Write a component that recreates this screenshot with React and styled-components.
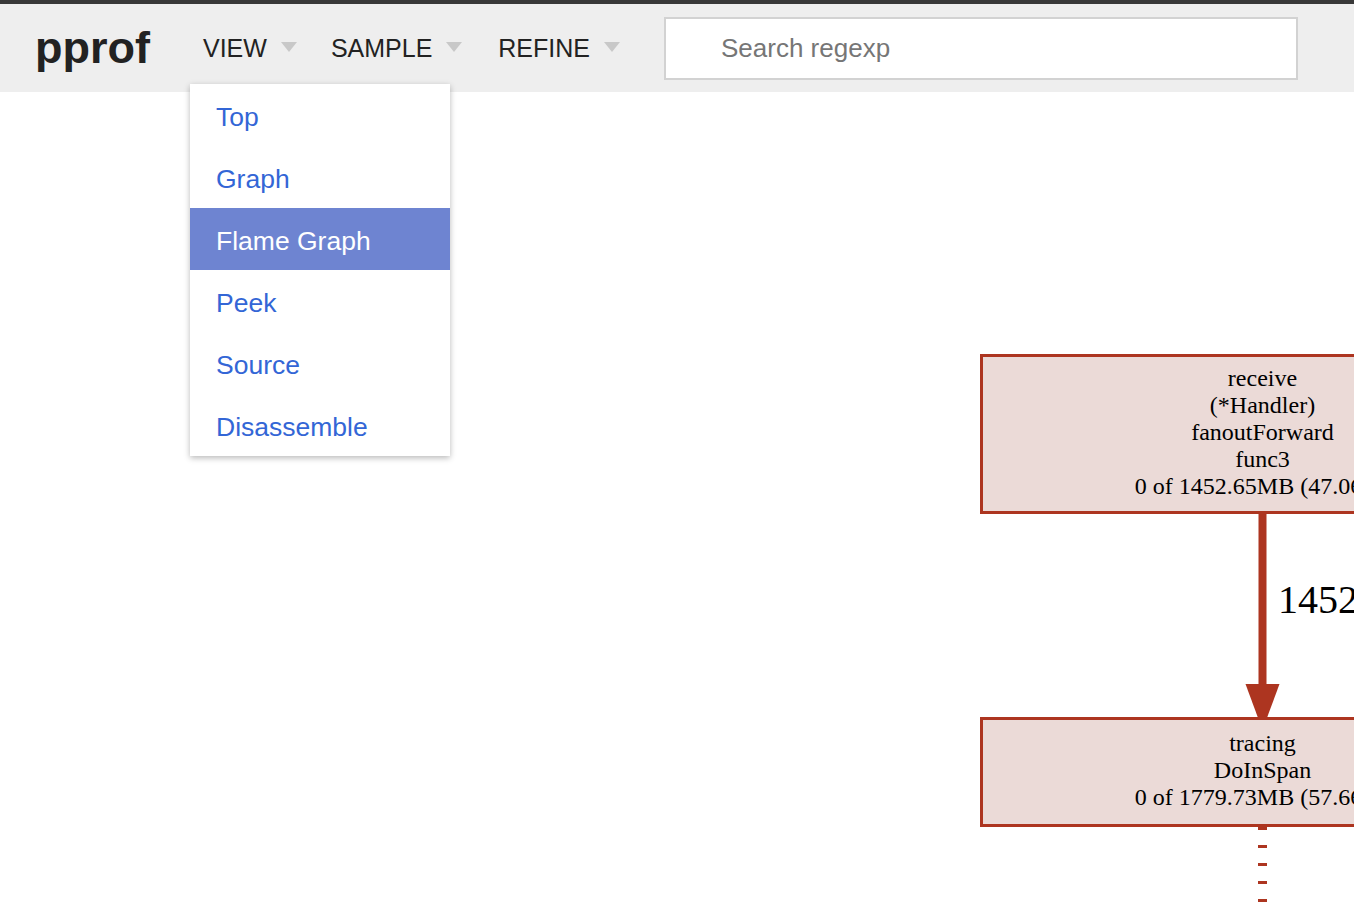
import styled, { createGlobalStyle } from "styled-components";

const GlobalStyle = createGlobalStyle`
  html, body {
    margin: 0;
    padding: 0;
    background: #fff;
    font-family: "Liberation Sans", Arial, sans-serif;
  }
`;

const Page = styled.div`
  position: relative;
  width: 100%;
  height: 912px;
  overflow: hidden;
  border-top: 4px solid #383838;
  box-sizing: border-box;
`;

const Header = styled.header`
  display: flex;
  align-items: center;
  height: 88px;
  padding-left: 35px;
  background: #eeeeee;
`;

const Logo = styled.h1`
  margin: 0 53px 0 0;
  font-size: 45px;
  font-weight: 700;
  color: #222;
`;

const MenuButton = styled.div`
  display: flex;
  align-items: center;
  gap: 14px;
  margin-right: ${(p) => p.$after}px;
  font-size: 25px;
  color: #222;
  cursor: pointer;
`;

const Caret = styled.span`
  width: 0;
  height: 0;
  border-left: 8.5px solid transparent;
  border-right: 8.5px solid transparent;
  border-top: 10px solid #c8c8c8;
  margin-top: -3px;
`;

const Search = styled.input`
  box-sizing: border-box;
  width: 634px;
  height: 63px;
  border: 2px solid #d2d2d2;
  background: #fff;
  padding: 0 0 0 55px;
  font-family: inherit;
  font-size: 26px;
  color: #333;
  outline: none;
  &::placeholder {
    color: #767676;
  }
`;

const Dropdown = styled.ul`
  position: absolute;
  top: 80px;
  left: 190px;
  width: 260px;
  margin: 0;
  padding: 0;
  list-style: none;
  background: #fff;
  box-shadow: 0 2px 6px rgba(0, 0, 0, 0.28);
`;

const Item = styled.li`
  display: flex;
  align-items: center;
  box-sizing: border-box;
  height: 62px;
  padding: 4px 0 0 26px;
  font-size: 26.5px;
  color: ${(p) => (p.$active ? "#fff" : "#3366d6")};
  background: ${(p) => (p.$active ? "#6e84d1" : "transparent")};
  cursor: pointer;
`;

const Canvas = styled.svg`
  display: block;
  width: 1354px;
  height: 820px;
`;

const views = ["Top", "Graph", "Flame Graph", "Peek", "Source", "Disassemble"];
const stroke = "#ad3520";
const fill = "#ebdad7";

function Node({ y, h, lines, firstBaseline }) {
  return (
    <g>
      <rect x="981.5" y={y} width="600" height={h} fill={fill} stroke={stroke} strokeWidth="3" />
      {lines.map((t, i) => (
        <text
          key={i}
          x="1262.5"
          y={firstBaseline + i * 27}
          textAnchor="middle"
          fontFamily="'Liberation Serif', 'Times New Roman', serif"
          fontSize="24"
          fill="#000"
        >
          {t}
        </text>
      ))}
    </g>
  );
}

export default function App() {
  return (
    <>
      <GlobalStyle />
      <Page>
        <Header>
          <Logo>pprof</Logo>
          <MenuButton $after={34}>VIEW<Caret /></MenuButton>
          <MenuButton $after={36}>SAMPLE<Caret /></MenuButton>
          <MenuButton $after={44}>REFINE<Caret /></MenuButton>
          <Search placeholder="Search regexp" />
        </Header>
        <Canvas viewBox="0 92 1354 820">
          <Node
            y={355.5}
            h={157}
            firstBaseline={386}
            lines={["receive", "(*Handler)", "fanoutForward", "func3", "0 of 1452.65MB (47.06%)"]}
          />
          <line x1="1262.5" y1="514" x2="1262.5" y2="686" stroke={stroke} strokeWidth="8" />
          <polygon points="1245.5,684 1279.5,684 1262.5,730" fill={stroke} />
          <text
            x="1278"
            y="613"
            fontFamily="'Liberation Serif', 'Times New Roman', serif"
            fontSize="40"
            fill="#000"
          >
            1452.65MB
          </text>
          <Node
            y={718.5}
            h={107}
            firstBaseline={751}
            lines={["tracing", "DoInSpan", "0 of 1779.73MB (57.66%)"]}
          />
          <line
            x1="1262.5"
            y1="827"
            x2="1262.5"
            y2="912"
            stroke={stroke}
            strokeWidth="9"
            strokeDasharray="3 15"
          />
        </Canvas>
        <Dropdown>
          {views.map((v) => (
            <Item key={v} $active={v === "Flame Graph"}>{v}</Item>
          ))}
        </Dropdown>
      </Page>
    </>
  );
}
